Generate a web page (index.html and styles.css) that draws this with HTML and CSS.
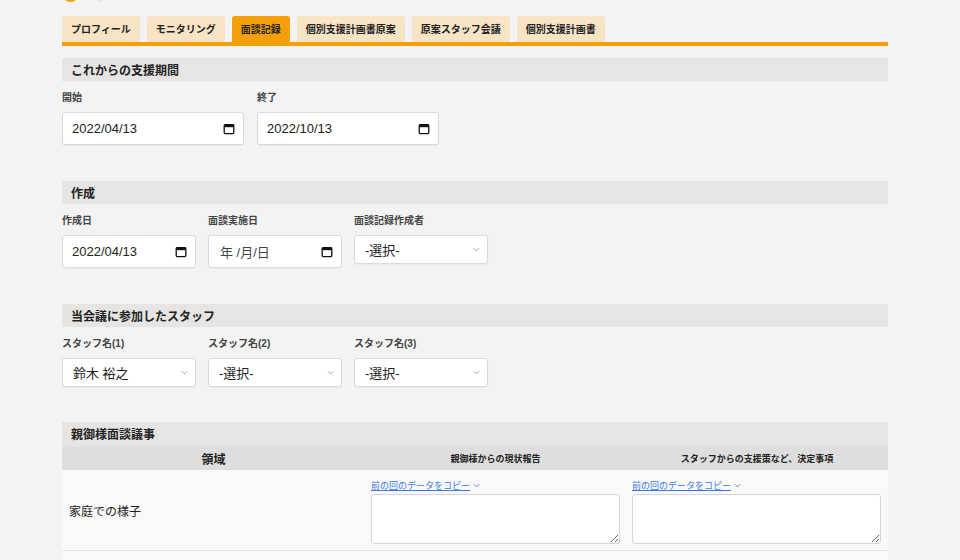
FILE: index.html
```html
<!DOCTYPE html>
<html lang="ja">
<head>
<meta charset="utf-8">
<title>面談記録</title>
<link rel="stylesheet" href="styles.css">
</head>
<body>
<div class="topbar">
  <span class="dot dot-orange"></span>
  <span class="dot dot-grey"></span>
</div>
<div class="page">
  <nav class="tabs">
    <a class="tab">プロフィール</a>
    <a class="tab">モニタリング</a>
    <a class="tab active">面談記録</a>
    <a class="tab">個別支援計画書原案</a>
    <a class="tab">原案スタッフ会議</a>
    <a class="tab">個別支援計画書</a>
  </nav>

  <section class="section">
    <h2 class="section-title">これからの支援期間</h2>
    <div class="fields wide">
      <div class="field">
        <label class="label">開始</label>
        <div class="date w182"><span>2022/04/13</span><svg class="cal" viewBox="0 0 12 12"><rect x="1.2" y="1.6" width="9.6" height="9" rx="1" fill="none" stroke="#111" stroke-width="1.3"/><rect x="1.2" y="1.6" width="9.6" height="2.6" fill="#111"/></svg></div>
      </div>
      <div class="field">
        <label class="label">終了</label>
        <div class="date w182"><span>2022/10/13</span><svg class="cal" viewBox="0 0 12 12"><rect x="1.2" y="1.6" width="9.6" height="9" rx="1" fill="none" stroke="#111" stroke-width="1.3"/><rect x="1.2" y="1.6" width="9.6" height="2.6" fill="#111"/></svg></div>
      </div>
    </div>
  </section>

  <section class="section">
    <h2 class="section-title">作成</h2>
    <div class="fields">
      <div class="field">
        <label class="label">作成日</label>
        <div class="date w134"><span>2022/04/13</span><svg class="cal" viewBox="0 0 12 12"><rect x="1.2" y="1.6" width="9.6" height="9" rx="1" fill="none" stroke="#111" stroke-width="1.3"/><rect x="1.2" y="1.6" width="9.6" height="2.6" fill="#111"/></svg></div>
      </div>
      <div class="field">
        <label class="label">面談実施日</label>
        <div class="date w134 empty"><span>年 /月/日</span><svg class="cal" viewBox="0 0 12 12"><rect x="1.2" y="1.6" width="9.6" height="9" rx="1" fill="none" stroke="#111" stroke-width="1.3"/><rect x="1.2" y="1.6" width="9.6" height="2.6" fill="#111"/></svg></div>
      </div>
      <div class="field">
        <label class="label">面談記録作成者</label>
        <div class="select w134"><span>-選択-</span><svg class="chev" viewBox="0 0 8 5"><path d="M1 1l3 3 3-3" fill="none" stroke="#888" stroke-width="0.9"/></svg></div>
      </div>
    </div>
  </section>

  <section class="section">
    <h2 class="section-title">当会議に参加したスタッフ</h2>
    <div class="fields">
      <div class="field">
        <label class="label">スタッフ名(1)</label>
        <div class="select w134"><span>鈴木 裕之</span><svg class="chev" viewBox="0 0 8 5"><path d="M1 1l3 3 3-3" fill="none" stroke="#888" stroke-width="0.9"/></svg></div>
      </div>
      <div class="field">
        <label class="label">スタッフ名(2)</label>
        <div class="select w134"><span>-選択-</span><svg class="chev" viewBox="0 0 8 5"><path d="M1 1l3 3 3-3" fill="none" stroke="#888" stroke-width="0.9"/></svg></div>
      </div>
      <div class="field">
        <label class="label">スタッフ名(3)</label>
        <div class="select w134"><span>-選択-</span><svg class="chev" viewBox="0 0 8 5"><path d="M1 1l3 3 3-3" fill="none" stroke="#888" stroke-width="0.9"/></svg></div>
      </div>
    </div>
  </section>

  <section class="section last">
    <h2 class="section-title">親御様面談議事</h2>
    <div class="table">
      <div class="row head">
        <div class="cell c1 th-big">領域</div>
        <div class="cell c2 th-small">親御様からの現状報告</div>
        <div class="cell c3 th-small">スタッフからの支援策など、決定事項</div>
      </div>
      <div class="row body">
        <div class="cell c1 area">家庭での様子</div>
        <div class="cell c2 input-cell">
          <a class="copy">前の回のデータをコピー</a><svg class="copy-chev" viewBox="0 0 8 5"><path d="M1 1l3 3 3-3" fill="none" stroke="#3b7ae6" stroke-width="1"/></svg>
          <textarea class="ta"></textarea>
        </div>
        <div class="cell c3 input-cell">
          <a class="copy">前の回のデータをコピー</a><svg class="copy-chev" viewBox="0 0 8 5"><path d="M1 1l3 3 3-3" fill="none" stroke="#3b7ae6" stroke-width="1"/></svg>
          <textarea class="ta"></textarea>
        </div>
      </div>
      <div class="row body">
        <div class="cell c1 area"></div>
        <div class="cell c2"></div>
        <div class="cell c3"></div>
      </div>
    </div>
  </section>
</div>
</body>
</html>
```

FILE: styles.css
```css
* { box-sizing: border-box; }
html, body { margin: 0; padding: 0; }
body {
  background: #f3f3f3;
  font-family: "Liberation Sans", "Noto Sans CJK JP", sans-serif;
  color: #222;
  overflow: hidden;
}
.topbar {
  height: 16px;
  overflow: hidden;
  display: flex;
  gap: 16px;
  padding-left: 62px;
}
.dot {
  width: 17px;
  height: 17px;
  border-radius: 50%;
  margin-top: -15px;
}
.dot-orange { background: #f5a00a; }
.dot-grey { background: #e4e4e4; width: 10px; height: 10px; margin-top: -9px; }

.page {
  margin-left: 62px;
  width: 826px;
}
.tabs {
  display: flex;
  gap: 7px;
  border-bottom: 4px solid #f5a00a;
}
.tab {
  height: 26px;
  line-height: 26px;
  padding: 0 9px;
  background: #f7e4c5;
  border-radius: 3px 3px 0 0;
  font-size: 10px;
  font-weight: bold;
  color: #222;
  font-family: "Noto Sans CJK JP", sans-serif;
  white-space: nowrap;
}
.tab.active { background: #f5a00a; }

.section { margin-top: 12px; margin-bottom: 36px; }
.section + .section { margin-top: 0; }
.section-title {
  margin: 0;
  height: 23px;
  line-height: 23px;
  padding-left: 9px;
  background: #e6e5e4;
  font-size: 12px;
  font-weight: bold;
  color: #222;
  font-family: "Noto Sans CJK JP", sans-serif;
}
.fields {
  display: flex;
  gap: 12px;
  margin-top: 10px;
  align-items: flex-start;
}
.fields.wide { gap: 13px; }
.field { display: flex; flex-direction: column; }
.label {
  font-size: 10px;
  line-height: 14px;
  font-weight: bold;
  color: #444;
  margin-bottom: 7px;
  font-family: "Liberation Sans", "Noto Sans CJK JP", sans-serif;
}
.date, .select {
  display: flex;
  align-items: center;
  justify-content: space-between;
  background: #fff;
  border: 1px solid #dadada;
  border-radius: 3px;
  box-shadow: 0 1px 1px rgba(0,0,0,0.04);
  font-size: 13px;
  color: #222;
}
.date { height: 33px; padding: 0 8px 0 9px; }
.date.empty { padding-left: 11px; color: #444; }
.select { height: 29px; padding: 0 7px 0 10px; }
.w182 { width: 182px; }
.w134 { width: 134px; }
.cal { width: 12px; height: 12px; }
.chev { width: 7px; height: 5px; }

.section.last { margin-bottom: 0; margin-top: -1px; }
.section.last .section-title { height: 24px; line-height: 24px; }
.table { display: flex; flex-direction: column; }
.row { display: flex; }
.row.head {
  background: #dedede;
  height: 24px;
  align-items: center;
}
.cell.c1 { width: 303px; }
.cell.c2 { width: 261px; }
.cell.c3 { width: 262px; }
.th-big {
  text-align: center;
  font-size: 12px;
  font-weight: bold;
  font-family: "Noto Sans CJK JP", sans-serif;
}
.th-small {
  text-align: center;
  font-size: 9px;
  font-weight: bold;
  font-family: "Noto Sans CJK JP", sans-serif;
}
.row.body {
  background: #f9f9f8;
  height: 81px;
  border-bottom: 1px solid #e5e5e5;
}
.area {
  display: flex;
  align-items: center;
  padding-left: 7px;
  padding-top: 1px;
  font-size: 12px;
  color: #222;
  font-family: "Noto Sans CJK JP", sans-serif;
}
.input-cell { padding: 5px 6px 0 6px; }
.copy {
  font-size: 9px;
  line-height: 12px;
  color: #3b7ae6;
  text-decoration: underline;
  font-family: "Noto Sans CJK JP", sans-serif;
  cursor: pointer;
}
.copy-chev { width: 7px; height: 5px; margin-left: 3px; vertical-align: 1px; }
.ta {
  display: block;
  width: 249px;
  height: 50px;
  margin-top: 1px;
  background: #fff;
  border: 1px solid #d6d6d6;
  border-radius: 3px;
  resize: vertical;
}
```
